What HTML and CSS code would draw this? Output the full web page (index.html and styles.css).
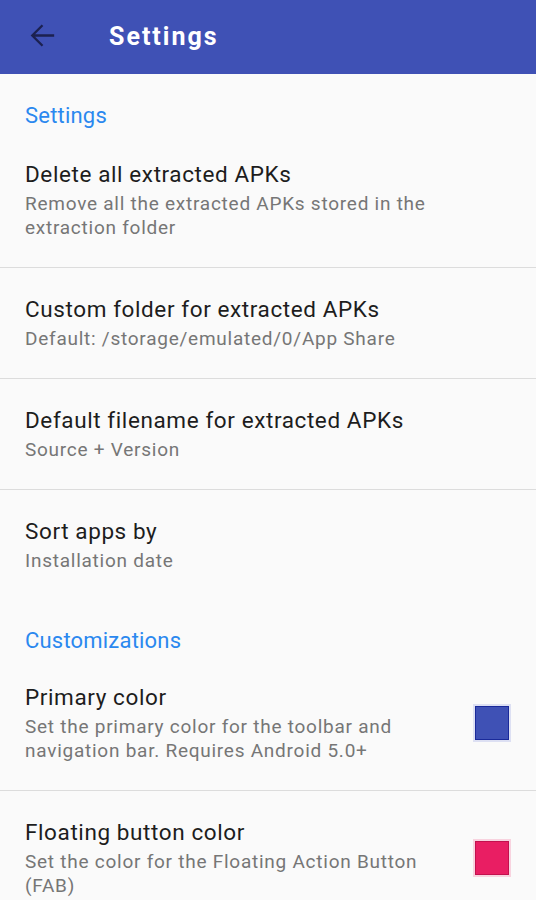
FILE: index.html
```html
<!DOCTYPE html>
<html lang="en">
<head>
    <meta charset="UTF-8">
    <meta name="viewport" content="width=device-width, initial-scale=1.0">
    <title>Settings</title>
    <link rel="stylesheet" href="styles.css">
</head>
<body>
    <header class="toolbar">
        <svg class="back" viewBox="0 0 24 24" width="35" height="35">
            <path d="M20 12H5M12 5l-7 7 7 7" fill="none" stroke="#1c2150" stroke-width="1.6"/>
        </svg>
        <h1>Settings</h1>
    </header>

    <div class="category">Settings</div>

    <div class="pref">
        <div class="pref-text">
            <div class="pref-title">Delete all extracted APKs</div>
            <div class="pref-summary">Remove all the extracted APKs stored in the extraction folder</div>
        </div>
    </div>

    <div class="pref">
        <div class="pref-text">
            <div class="pref-title">Custom folder for extracted APKs</div>
            <div class="pref-summary">Default: /storage/emulated/0/App Share</div>
        </div>
    </div>

    <div class="pref">
        <div class="pref-text">
            <div class="pref-title">Default filename for extracted APKs</div>
            <div class="pref-summary">Source + Version</div>
        </div>
    </div>

    <div class="pref last">
        <div class="pref-text">
            <div class="pref-title">Sort apps by</div>
            <div class="pref-summary">Installation date</div>
        </div>
    </div>

    <div class="category second">Customizations</div>

    <div class="pref">
        <div class="pref-text">
            <div class="pref-title">Primary color</div>
            <div class="pref-summary">Set the primary color for the toolbar and navigation bar. Requires Android 5.0+</div>
        </div>
        <div class="swatch blue"></div>
    </div>

    <div class="pref last">
        <div class="pref-text">
            <div class="pref-title">Floating button color</div>
            <div class="pref-summary">Set the color for the Floating Action Button (FAB)</div>
        </div>
        <div class="swatch pink"></div>
    </div>
</body>
</html>
```

FILE: styles.css
```css
body {
    margin: 0;
    background-color: #fafafa;
    font-family: Roboto, "Liberation Sans", sans-serif;
    overflow: hidden;
}

/* barra superior */
.toolbar {
    height: 74px;
    background-color: #3f51b5;
    display: flex;
    align-items: center;
    box-sizing: border-box;
    padding-left: 25px;
}

.toolbar .back {
    margin-top: -4px;
}

.toolbar h1 {
    margin: 0 0 2px 49px;
    color: #fff;
    font-size: 25px;
    font-weight: 700;
    letter-spacing: 2px;
}

/* titulos de categoria */
.category {
    padding: 28px 25px 3px;
    color: #2a88ef;
    font-size: 22px;
    line-height: 28px;
    letter-spacing: 0.2px;
}

.category.second {
    padding-top: 27px;
    padding-bottom: 1px;
}

/* itens de preferencia */
.pref {
    display: flex;
    align-items: center;
    padding: 27px 27px 27px 25px;
    border-bottom: 1px solid #dcdcdc;
}

.pref.last {
    border-bottom: none;
}

.pref-text {
    flex: 1;
    padding-right: 22px;
}

.pref-title {
    color: #1d1d1d;
    font-size: 22.5px;
    line-height: 28px;
    letter-spacing: 0.6px;
}

.pref-summary {
    margin-top: 4px;
    color: #767676;
    font-size: 19px;
    line-height: 24px;
    letter-spacing: 0.75px;
}

.swatch {
    width: 32px;
    height: 32px;
    flex-shrink: 0;
}

.swatch.blue {
    background-color: #3f51b5;
    border: 1px solid #1a2a9a;
    box-shadow: 0 0 0 2px #dde0f3;
}

.swatch.pink {
    background-color: #e91e63;
    border: 1px solid #c2114e;
    box-shadow: 0 0 0 2px #f8d3df;
}
```
